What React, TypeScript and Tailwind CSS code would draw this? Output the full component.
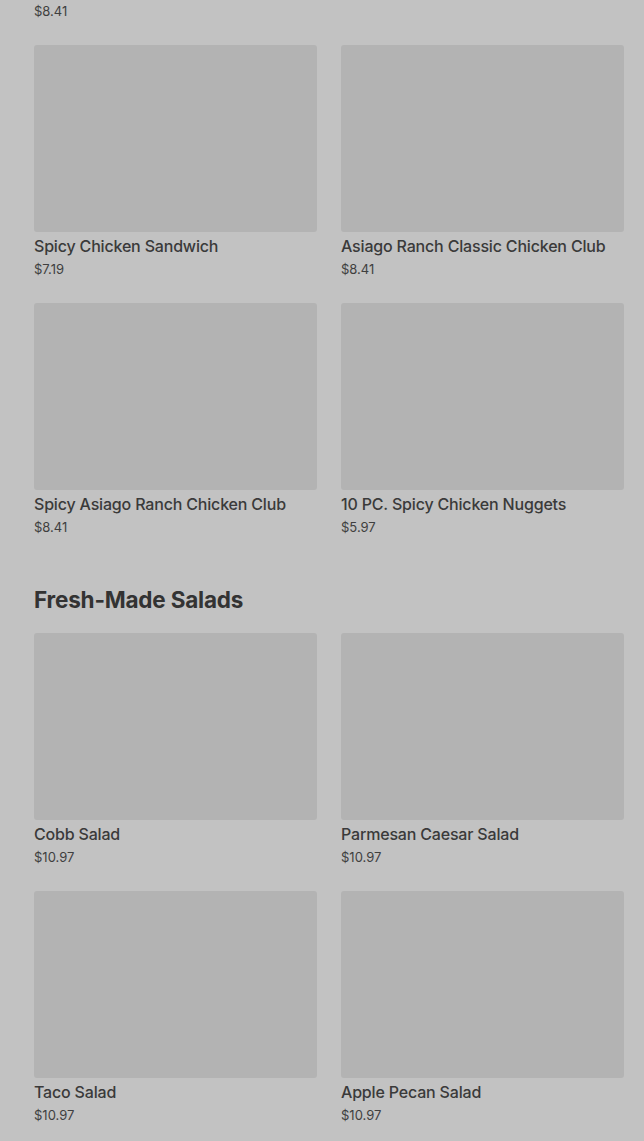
const chicken = [
  { name: "Spicy Chicken Sandwich", price: "$7.19" },
  { name: "Asiago Ranch Classic Chicken Club", price: "$8.41" },
  { name: "Spicy Asiago Ranch Chicken Club", price: "$8.41" },
  { name: "10 PC. Spicy Chicken Nuggets", price: "$5.97" },
];

const salads = [
  { name: "Cobb Salad", price: "$10.97" },
  { name: "Parmesan Caesar Salad", price: "$10.97" },
  { name: "Taco Salad", price: "$10.97" },
  { name: "Apple Pecan Salad", price: "$10.97" },
];

type Item = { name: string; price: string };

const MenuCard = ({ item }: { item: Item }) => (
  <div className="flex flex-col">
    <div className="h-[187px] w-full rounded-[3px] bg-[#b3b3b3]" />
    <div className="mt-[4px] text-[16px] leading-[20px] font-medium tracking-[-0.18px] text-[#3a3a3a]">
      {item.name}
    </div>
    <div className="mt-[4px] text-[13px] leading-[18px] text-[#3f3f3f]">
      {item.price}
    </div>
  </div>
);

export default function App() {
  return (
    <div
      className="min-h-screen overflow-hidden bg-[#c2c2c2] pl-[34px] pr-[20px]"
      style={{ fontFamily: "Inter, 'Noto Sans', sans-serif" }}
    >
      <div className="-mt-[213px] grid grid-cols-2 gap-x-[24px] gap-y-[25px]">
        <MenuCard item={{ name: "Classic Chicken Club", price: "$8.41" }} />
        <div />
        {chicken.map((item) => (
          <MenuCard key={item.name} item={item} />
        ))}
      </div>

      <h2 className="mt-[50px] mb-[19px] text-[22.5px] leading-[28px] font-bold tracking-[-0.2px] text-[#333333]">
        Fresh-Made Salads
      </h2>

      <div className="grid grid-cols-2 gap-x-[24px] gap-y-[25px]">
        {salads.map((item) => (
          <MenuCard key={item.name} item={item} />
        ))}
      </div>
    </div>
  );
}
